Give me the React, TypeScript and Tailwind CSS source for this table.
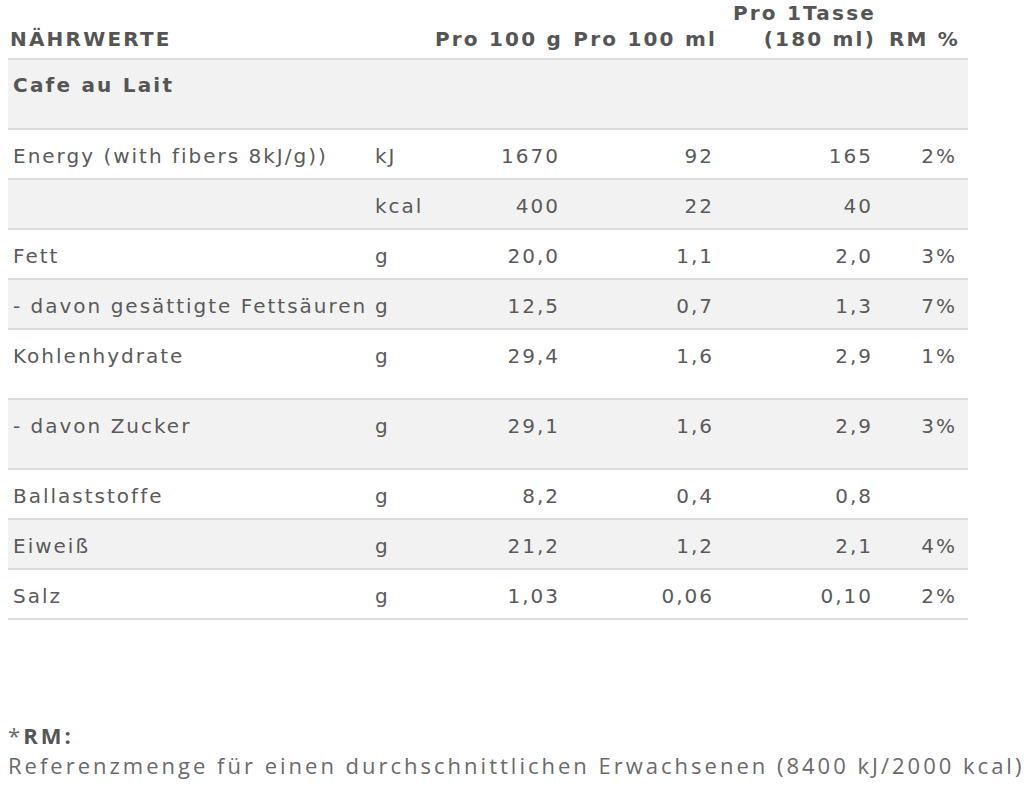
const rows = [
  { label: "Energy (with fibers 8kJ/g))", unit: "kJ", g: "1670", ml: "92", cup: "165", rm: "2%", tall: false },
  { label: "", unit: "kcal", g: "400", ml: "22", cup: "40", rm: "", tall: false },
  { label: "Fett", unit: "g", g: "20,0", ml: "1,1", cup: "2,0", rm: "3%", tall: false },
  { label: "- davon gesättigte Fettsäuren", unit: "g", g: "12,5", ml: "0,7", cup: "1,3", rm: "7%", tall: false },
  { label: "Kohlenhydrate", unit: "g", g: "29,4", ml: "1,6", cup: "2,9", rm: "1%", tall: true },
  { label: "- davon Zucker", unit: "g", g: "29,1", ml: "1,6", cup: "2,9", rm: "3%", tall: true },
  { label: "Ballaststoffe", unit: "g", g: "8,2", ml: "0,4", cup: "0,8", rm: "", tall: false },
  { label: "Eiweiß", unit: "g", g: "21,2", ml: "1,2", cup: "2,1", rm: "4%", tall: false },
  { label: "Salz", unit: "g", g: "1,03", ml: "0,06", cup: "0,10", rm: "2%", tall: false },
]

const cols = "grid grid-cols-[362px_90px_105px_154px_159px_90px]"

export default function App() {
  return (
    <main className="h-[792px] w-[1024px] overflow-hidden bg-white text-[#5a5a5a] [font-family:'DejaVu_Sans',Verdana,sans-serif]">
      <div className="ml-[8px] w-[960px]">
        {/* header */}
        <div className={`${cols} h-[60px] items-end border-b-2 border-[#dcdcdc] pb-[11px] text-[20px] font-bold leading-[26px] tracking-[2.2px] text-[#555]`}>
          <div className="whitespace-nowrap pl-[2px]">NÄHRWERTE</div>
          <div />
          <div className="flex justify-end whitespace-nowrap pr-[2px]">Pro 100 g</div>
          <div className="flex justify-end whitespace-nowrap pr-[2px]">Pro 100 ml</div>
          <div className="flex justify-end whitespace-nowrap pr-[2px] text-right">
            <span>
              Pro 1Tasse
              <br />
              (180 ml)
            </span>
          </div>
          <div className="flex justify-end whitespace-nowrap pr-[8px]">RM %</div>
        </div>

        <div className="h-[70px] border-b-2 border-[#dcdcdc] bg-[#f2f2f2] pl-[5px] pt-[13px] text-[20px] font-bold leading-[24px] tracking-[2.2px] text-[#555]">
          Cafe au Lait
        </div>

        {rows.map((row, i) => (
          <div
            key={i}
            className={`${cols} ${row.tall ? "h-[70px]" : "h-[50px]"} ${
              i % 2 === 1 ? "bg-[#f2f2f2]" : "bg-white"
            } border-b-2 border-[#dcdcdc] pt-[14px] text-[20px] leading-[24px] tracking-[2px]`}
          >
            <div className="whitespace-nowrap pl-[5px]">{row.label}</div>
            <div className="pl-[5px]">{row.unit}</div>
            <div className="text-right pr-[5px]">{row.g}</div>
            <div className="text-right pr-[5px]">{row.ml}</div>
            <div className="text-right pr-[5px]">{row.cup}</div>
            <div className="text-right pr-[11px]">{row.rm}</div>
          </div>
        ))}
      </div>

      <div className="mt-[100px] pl-[8px] text-[22px] leading-[30px] tracking-[3px] text-[#6a6a6a] [font-family:'Open_Sans',Tahoma,sans-serif]">
        <p>
          *<span className="font-bold text-[#555]">RM:</span>
        </p>
        <p className="whitespace-nowrap">
          Referenzmenge für einen durchschnittlichen Erwachsenen (8400 kJ/2000 kcal)
        </p>
      </div>
    </main>
  )
}
